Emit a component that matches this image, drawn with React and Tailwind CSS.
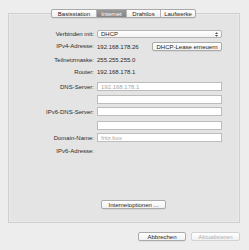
import React from "react";

// Netzwerk-Einstellungen — Tab "Internet"

const font = { fontFamily: '"Liberation Sans", Arial, sans-serif' };

function Label({ children }) {
  return <div className="w-[88px] text-right pr-[3px] text-[#2b2b2b]">{children}</div>;
}

function Field({ value, placeholder }) {
  return (
    <div className="w-[125px] h-[9px] bg-white border border-[#bcbcbc] flex items-center px-[3px] leading-none">
      {value ? (
        <span className="text-[#2b2b2b]">{value}</span>
      ) : (
        <span className="text-[#a6a6a6]">{placeholder}</span>
      )}
    </div>
  );
}

function Button({ children, disabled, className = "" }) {
  return (
    <div
      className={`h-[9px] flex items-center justify-center rounded-[2px] border leading-none bg-gradient-to-b from-white to-[#f1f1f1] ${
        disabled ? "border-[#d2d2d2] text-[#b0b0b0]" : "border-[#ababab] text-[#262626] shadow-[0_0.5px_0_rgba(0,0,0,0.12)]"
      } ${className}`}
    >
      {children}
    </div>
  );
}

const tabs = [
  { name: "Basisstation", w: "w-[44px]" },
  { name: "Internet", w: "w-[30px]", active: true },
  { name: "Drahtlos", w: "w-[34px]" },
  { name: "Laufwerke", w: "w-[35px]" },
];

export default function App() {
  return (
    <div className="w-[249px] h-[250px] bg-[#ededed] pt-[9px] pl-[8px] pr-[9px] text-[6px]" style={font}>
      {/* Tabs */}
      <div className="relative z-10 flex pl-[43px] h-[9px]">
        <div className="flex border border-[#a8a8a8] rounded-[2px] overflow-hidden bg-gradient-to-b from-white to-[#efefef] shadow-[0_0.5px_0_rgba(0,0,0,0.1)]">
          {tabs.map((t, i) => (
            <div
              key={t.name}
              className={`${t.w} flex items-center justify-center leading-none ${i > 0 ? "border-l border-[#b4b4b4]" : ""} ${
                t.active ? "bg-gradient-to-b from-[#9a9a9a] to-[#858585] text-white" : "text-[#262626]"
              }`}
            >
              {t.name}
            </div>
          ))}
        </div>
      </div>

      {/* Panel */}
      <div className="-mt-[5px] h-[210px] border border-[#d0d0d0] bg-[#e4e4e4] shadow-[inset_0_0_0_1px_#e9e9e9] flex flex-col pt-[16px]">
        <div className="flex items-center h-[8px]">
          <Label>Verbinden mit:</Label>
          <div className="w-[125px] h-[8px] bg-gradient-to-b from-white to-[#f3f3f3] border border-[#b4b4b4] rounded-[2px] flex items-center justify-between px-[3px] leading-none text-[#262626]">
            <span>DHCP</span>
            <svg width="3" height="5" viewBox="0 0 3 5">
              <path d="M0 2 L1.5 0.3 L3 2 Z M0 3 L1.5 4.7 L3 3 Z" fill="#444" />
            </svg>
          </div>
        </div>

        <div className="flex items-center h-[9px] mt-[4px]">
          <Label>IPv4-Adresse:</Label>
          <div className="w-[55px] text-[#2b2b2b] leading-none">192.168.178.26</div>
          <Button className="w-[70px]">DHCP-Lease erneuern</Button>
        </div>

        <div className="flex items-center h-[8px] mt-[5px] leading-none">
          <Label>Teilnetzmaske:</Label>
          <span className="text-[#2b2b2b]">255.255.255.0</span>
        </div>

        <div className="flex items-center h-[8px] mt-[4px] leading-none">
          <Label>Router:</Label>
          <span className="text-[#2b2b2b]">192.168.178.1</span>
        </div>

        <div className="flex items-center h-[9px] mt-[6px] leading-none">
          <Label>DNS-Server:</Label>
          <Field placeholder="192.168.178.1" />
        </div>

        <div className="flex items-center h-[9px] mt-[4px]">
          <Label />
          <Field />
        </div>

        <div className="flex items-center h-[9px] mt-[3px] leading-none">
          <Label>IPv6-DNS-Server:</Label>
          <Field />
        </div>

        <div className="flex items-center h-[9px] mt-[5px]">
          <Label />
          <Field />
        </div>

        <div className="flex items-center h-[9px] mt-[3px] leading-none">
          <Label>Domain-Name:</Label>
          <Field placeholder="fritz.box" />
        </div>

        <div className="flex items-center h-[8px] mt-[5px] leading-none">
          <Label>IPv6-Adresse:</Label>
        </div>

        <div className="flex-1" />
        <div className="flex pl-[92px] mb-[13px]">
          <Button className="w-[65px]">Internetoptionen ...</Button>
        </div>
      </div>

      {/* Footer buttons */}
      <div className="flex justify-end gap-[5px] mt-[9px]">
        <Button className="w-[48px]">Abbrechen</Button>
        <Button className="w-[49px]" disabled>
          Aktualisieren
        </Button>
      </div>
    </div>
  );
}
